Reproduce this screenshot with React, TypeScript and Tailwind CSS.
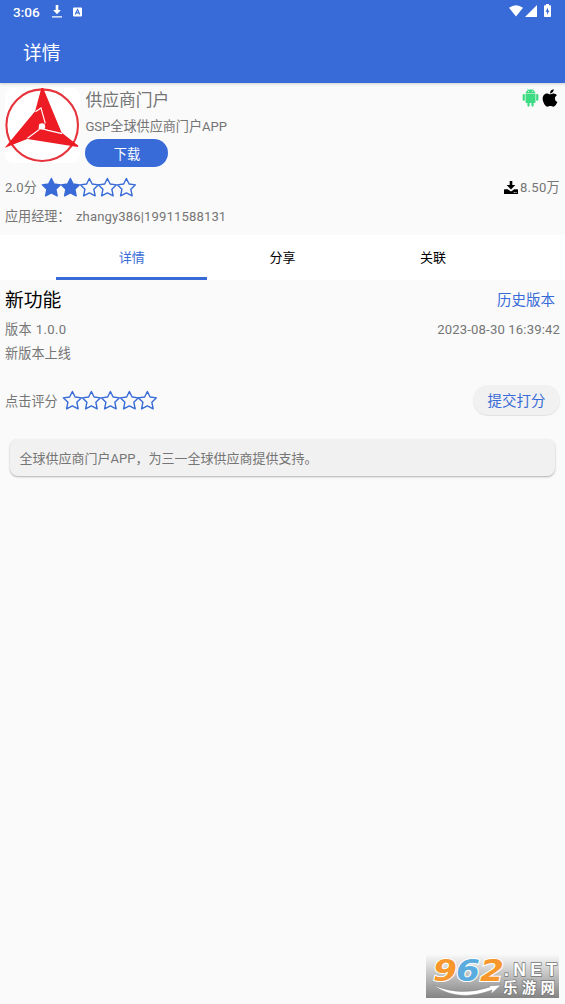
import clsx from "clsx";
import { AiFillAndroid } from "react-icons/ai";
import { FaApple } from "react-icons/fa";

const tabs = ["详情", "分享", "关联"];

function Star({ filled = false }: { filled?: boolean }) {
  return (
    <svg viewBox="0 0 24 24" className="h-[19px] w-[18.75px] shrink-0 overflow-visible" stroke="#386bd7" strokeWidth="1.8" strokeLinejoin="round" fill={filled ? "#386bd7" : "none"}>
      <path d="M12 .4l3.5 7.2 8.1 1-5.9 5.6 1.7 8.5L12 19l-7.4 3.7 1.7-8.5L.4 8.6l8.1-1z" />
    </svg>
  );
}

function Rating({ value }: { value: number }) {
  return (
    <div className="flex">
      {[1, 2, 3, 4, 5].map((n) => (
        <Star key={n} filled={n <= value} />
      ))}
    </div>
  );
}

function AppLogo() {
  return (
    <svg viewBox="0 0 75 75" className="h-[75px] w-[75px] shrink-0 rounded-lg bg-white">
      <circle cx="37.2" cy="37.2" r="35.8" fill="none" stroke="#e5343b" strokeWidth="2.1" />
      <path d="M37.2-.4L56 45 73 58.2 22.5 50.2 2 58.2 30.8 23.5z" fill="#ed1c24" stroke="#ed1c24" strokeWidth="1.4" />
      {/* seams between the three blades */}
      <path d="M30.5 23.8L36 20l4.3 15.5M22.5 50.2L34 41.6l1-5.6M57 45.6L43 42.4l-9-2.6" fill="none" stroke="#fff" strokeWidth="1.1" />
      <circle cx="37" cy="38.4" r="3.2" fill="#fff" />
    </svg>
  );
}

function StatusBar() {
  return (
    <div className="flex h-6 items-center pl-[13px] pr-[14px] text-white">
      <span className="w-[28px] text-[13.6px] font-medium leading-6">3:06</span>
      <svg viewBox="0 0 10 13" className="-mt-px ml-[11px] h-[13px] w-[10px]" fill="currentColor">
        <path d="M3.7 0h2.6v5h2.6L5 9.2 1.1 5h2.6zM0 11.2h10v1.3H0z" />
      </svg>
      <svg viewBox="0 0 10 10" className="-mt-px ml-[11px] h-[10px] w-[9px]">
        <rect width="10" height="10" rx="1" fill="white" />
        <path d="M2.4 7.7L5 2.3l2.6 5.4M3.4 6h3.2" fill="none" stroke="#386bd7" strokeWidth="1.2" />
      </svg>
      <svg viewBox="0 0 14 12" className="-mt-[3px] ml-auto h-3 w-[14px]" fill="currentColor">
        <path d="M0 2.8Q7-2.4 14 2.8L7 11.5z" />
      </svg>
      <svg viewBox="0 0 12 12" className="-mt-0.5 ml-[2px] h-3 w-3" fill="currentColor">
        <path d="M12 0v12H0z" />
      </svg>
      <svg viewBox="0 0 7 13" className="-mt-[3px] ml-[7px] h-[13px] w-[7px]">
        <path d="M2 0h3v1.3h1.3q.7 0 .7.7v10.3q0 .7-.7.7H.7q-.7 0-.7-.7V2q0-.7.7-.7H2z" fill="white" />
        <path d="M4 3.5L1.5 7.7H3v3l2.5-4.2H4z" fill="#386bd7" />
      </svg>
    </div>
  );
}

function Watermark() {
  return (
    <svg viewBox="0 0 133 44" className="absolute left-[426px] top-[954px] h-[44px] w-[133px] overflow-visible">
      <defs>
        <linearGradient id="shade" x1="0" y1="0" x2="0" y2="1">
          <stop offset="0" stopColor="#fafafa" />
          <stop offset=".5" stopColor="#bfbfbf" />
          <stop offset="1" stopColor="#838383" />
        </linearGradient>
      </defs>
      <rect width="133" height="44" fill="url(#shade)" />
      <path d="M7 31Q32 49 66 36l-1 4 10-9-13 1 2 1Q34 43 7 31z" fill="white" stroke="#888" strokeWidth=".5" />
      <g fontFamily="DejaVu Sans, sans-serif" fontWeight="700" fontStyle="italic" fontSize="31" stroke="white" strokeWidth="2" paintOrder="stroke">
        <text x="7" y="27.3" fill="#f8972b" textLength="24" lengthAdjust="spacingAndGlyphs">9</text>
        <text x="30" y="27.3" fill="#59acdd" textLength="24" lengthAdjust="spacingAndGlyphs">6</text>
        <text x="54" y="27.3" fill="#f8972b" textLength="24" lengthAdjust="spacingAndGlyphs">2</text>
      </g>
      <g fill="white" stroke="#777" strokeWidth="1.4" paintOrder="stroke" fontWeight="700">
        <text x="78" y="21.5" fontFamily="Liberation Sans, sans-serif" fontSize="17.5" textLength="53" lengthAdjust="spacing">.NET</text>
        <text x="77" y="39" fontFamily="Noto Sans CJK SC, sans-serif" fontSize="14.5" textLength="52">乐游网</text>
      </g>
    </svg>
  );
}

export default function App() {
  return (
    <div className="relative h-[1004px] w-[565px] overflow-hidden bg-[#fafafa] font-[Roboto,'Noto_Sans_CJK_SC',sans-serif] text-[13.1px] text-[#757575]">
      <header className="h-[83px] bg-[#386bd7] shadow-[0_1px_3px_rgba(0,0,0,0.18)]">
        <StatusBar />
        <h1 className="pl-[23px] pt-4 text-[18.8px] leading-7 text-white">详情</h1>
      </header>

      {/* App summary */}
      <section className="h-[152px] px-[5px] pt-[5px]">
        <div className="flex h-[80px]">
          <AppLogo />
          <div className="ml-[5.4px] flex flex-col items-start">
            <h2 className="h-6 text-[16.8px] leading-6">供应商门户</h2>
            <p className="mt-1 h-5 leading-[21px]">GSP全球供应商门户APP</p>
            <button className="mt-[3px] h-[28px] w-[83px] rounded-full bg-[#386bd7] pt-[3px] text-[13.2px] leading-[26px] text-white">下载</button>
          </div>
          <div className="ml-auto flex h-5 items-center">
            <AiFillAndroid className="-mt-0.5 h-[21px] w-[21px] text-[#3ddc84]" />
            <FaApple className="-ml-px -mt-px h-[20px] w-[20px] text-black" />
          </div>
        </div>
        <div className="mt-[9px] flex h-5 items-center">
          <span className="mr-[5px] pt-px tracking-[0.2px]">2.0分</span>
          <Rating value={2} />
          <svg viewBox="0 0 14 13" className="ml-auto mr-[2px] h-[13px] w-[14px] text-black" fill="currentColor">
            <path d="M5.7 0h2.6v4h3L7 8.4 2.7 4h3z" />
            <path fillRule="evenodd" d="M.6 8.3h3.1L7 10.6l3.3-2.3h3.1q.6 0 .6.6v3.5q0 .6-.6.6H.6q-.6 0-.6-.6V8.9q0-.6.6-.6zM9.8 11v.9h.9V11zm1.8 0v.9h.9V11z" />
          </svg>
          <span className="pt-0.5 tracking-[0.3px]">8.50万</span>
        </div>
        <div className="mt-[10px] flex h-5 items-center">
          <span className="w-[71px]">应用经理：</span>
          <span className="tracking-[0.12px]">zhangy386|19911588131</span>
        </div>
      </section>

      {/* Tabs */}
      <nav className="flex h-[45px] bg-white px-[56.4px]">
        {tabs.map((tab, i) => (
          <button
            key={tab}
            className={clsx("w-[150.7px] border-b-[3px] pt-1 text-[13px]", i === 0 ? "border-[#386bd7] text-[#386bd7]" : "border-transparent text-black")}
          >
            {tab}
          </button>
        ))}
      </nav>

      {/* Release notes */}
      <section className="px-[5px] pt-[7px]">
        <div className="flex h-7 items-center justify-between">
          <h2 className="text-[18.8px] text-black">新功能</h2>
          <a className="pr-[5px] text-[14.5px] text-[#386bd7]">历史版本</a>
        </div>
        <div className="mt-[5px] flex h-5 items-center justify-between">
          <span className="tracking-[0.4px]">版本 1.0.0</span>
          <span className="tracking-[0.15px]">2023-08-30 16:39:42</span>
        </div>
        <p className="mt-1 leading-5 tracking-[0.1px]">新版本上线</p>
        <div className="mt-[21px] flex h-[30px] items-center">
          <span className="mr-[5.5px] pt-[3px] tracking-[0.1px]">点击评分</span>
          <Rating value={0} />
          <button className="ml-auto h-[30px] w-[87px] rounded-full bg-[#f1f1f1] pt-[3px] text-[14.5px] text-[#386bd7] shadow-[0_1px_1px_rgba(0,0,0,0.1)]">提交打分</button>
        </div>
      </section>

      <p className="mx-[10px] mt-6 h-[37px] rounded-lg bg-[#f1f1f1] px-[9.5px] text-[13px] leading-[39px] shadow-[0_1px_2px_rgba(0,0,0,0.3)]">
        全球供应商门户APP，为三一全球供应商提供支持。
      </p>

      <Watermark />
    </div>
  );
}
